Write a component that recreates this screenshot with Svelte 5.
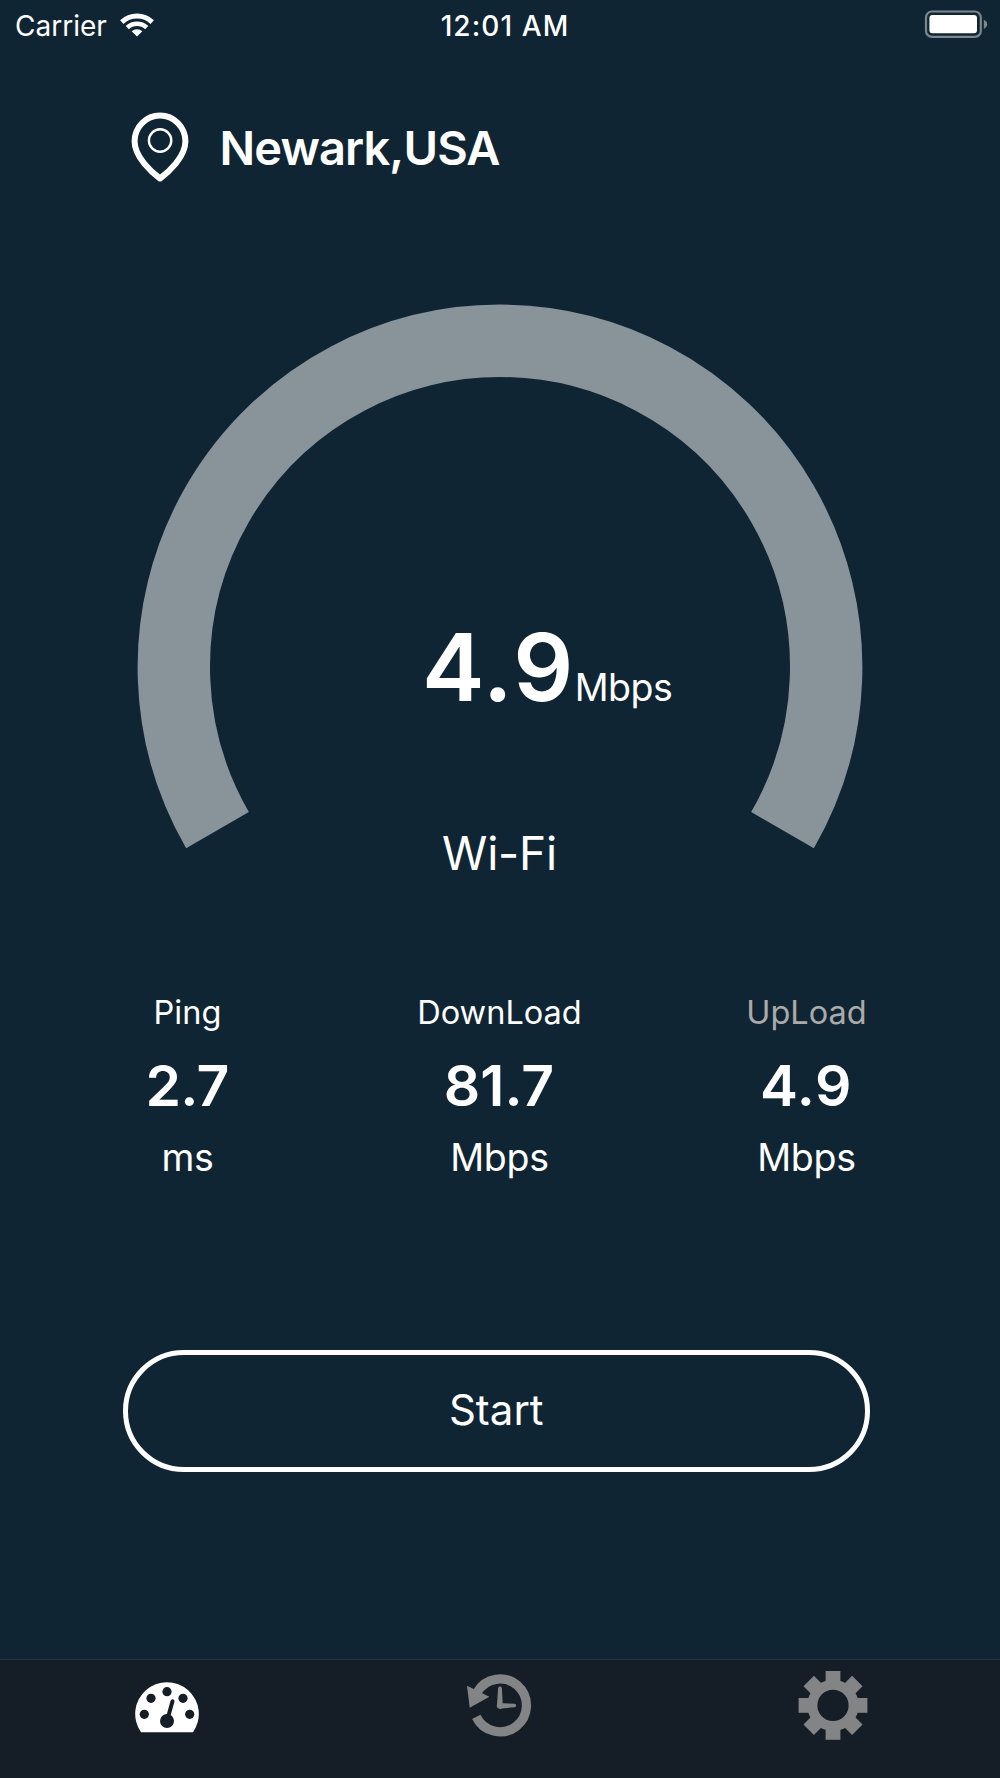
<script>
    let location = "Newark,USA";
    let network = "Wi-Fi";
    let speed = { value: "4.9", unit: "Mbps" };

    let results = [
        { label: "Ping", value: "2.7", unit: "ms", name: "ping" },
        { label: "DownLoad", value: "81.7", unit: "Mbps", name: "download" },
        { label: "UpLoad", value: "4.9", unit: "Mbps", name: "upload" }
    ];

    let gearAngles = [0, 45, 90, 135, 180, 225, 270, 315];
    let dialDots = [[17.3, 49.3], [24, 33.3], [40, 26.7], [56, 33.3], [62.7, 49.3]];
</script>

<div class="screen">
    <header class="statusBar">
        <div class="carrier">
            <span class="carrierName">Carrier</span>
            <svg class="wifi" width="36" height="28" viewBox="0 0 36 28">
                <path d="M2.8 12.1 A22 22 0 0 1 33.2 12.1" fill="none" stroke="#fff" stroke-width="5" />
                <path d="M8.3 17.6 A14.2 14.2 0 0 1 27.7 17.6" fill="none" stroke="#fff" stroke-width="4.6" />
                <path d="M18 26.6 L12.7 21.3 A7.8 7.8 0 0 1 23.3 21.3 Z" fill="#fff" />
            </svg>
        </div>
        <span class="clock">12:01 AM</span>
        <svg class="battery" width="64" height="28" viewBox="0 0 64 28">
            <rect x="2" y="1.5" width="54.8" height="25.4" rx="6" fill="none" stroke="#7d878e" stroke-width="2.2" />
            <rect x="5.4" y="5" width="47.6" height="18.2" rx="3" fill="#fff" />
            <path d="M59.8 9.5 Q63.2 11.5 63.2 14.2 Q63.2 17 59.8 19 Z" fill="#7d878e" />
        </svg>
    </header>

    <div class="location">
        <svg width="60" height="72" viewBox="0 0 60 72">
            <path d="M30 66.5 C22 60.5 4.6 45 4.6 29.5 A25.4 25.9 0 0 1 55.4 29.5 C55.4 45 38 60.5 30 66.5 Z" fill="none" stroke="#fff" stroke-width="6" stroke-linejoin="round" />
            <circle cx="30.1" cy="28.5" r="11.2" fill="none" stroke="#fff" stroke-width="2.4" />
        </svg>
        <span class="place">{location}</span>
    </div>

    <div class="meter">
        <svg width="726" height="546" viewBox="0 0 726 546">
            <path d="M80.5 526.1 A326.2 326.2 0 1 1 645.5 526.1" fill="none" stroke="#89939a" stroke-width="72.4" />
        </svg>
        <div class="reading">
            <div class="speed">
                <span class="speedValue">{speed.value}</span>
                <span class="speedUnit">{speed.unit}</span>
            </div>
            <div class="network">{network}</div>
        </div>
    </div>

    <div class="results">
        {#each results as result}
            <div class="result {result.name}">
                <span class="label">{result.label}</span>
                <span class="value">{result.value}</span>
                <span class="unit">{result.unit}</span>
            </div>
        {/each}
    </div>

    <button class="startButton">Start</button>

    <nav class="tabBar">
        <button class="tab active" aria-label="Speed test">
            <svg width="80" height="80" viewBox="0 0 80 80">
                <path d="M14 67.3 A31.8 31.8 0 1 1 66 67.3 Z" fill="currentColor" />
                <g class="cutout">
                    {#each dialDots as [x, y]}
                        <circle cx={x} cy={y} r="4.6" />
                    {/each}
                    <circle cx="40" cy="56" r="7" />
                    <path d="M41.4 51 L45.5 36.3" stroke-width="4" stroke-linecap="round" />
                </g>
            </svg>
        </button>
        <button class="tab" aria-label="History">
            <svg width="80" height="80" viewBox="0 0 80 80">
                <path d="M16.3 51.9 A26.4 26.4 0 1 0 17.2 27.2" fill="none" stroke="currentColor" stroke-width="9.3" />
                <path d="M7 20.7 L29.4 31.7 L9.7 42.7 Z" fill="currentColor" />
                <path d="M38.1 22.8 Q40 19.6 41.9 22.8 L42.7 38.2 L54.8 38.7 Q57.6 40.4 54.8 42.2 L42 43.4 A3.3 3.3 0 0 1 37 39.5 Z" fill="currentColor" />
            </svg>
        </button>
        <button class="tab" aria-label="Settings">
            <svg width="80" height="80" viewBox="0 0 80 80">
                <circle cx="40" cy="40.4" r="20.6" fill="none" stroke="currentColor" stroke-width="10" />
                {#each gearAngles as angle}
                    <rect x="32.6" y="6" width="14.8" height="15.5" fill="currentColor" transform="rotate({angle} 40 40.4)" />
                {/each}
            </svg>
        </button>
    </nav>
</div>

<style>
    :global(body) {
        margin: 0;
        background: #102533;
    }

    .screen {
        display: flex;
        flex-direction: column;
        width: 1000px;
        height: 1778px;
        background: #102533;
        color: #fff;
        font-family: Inter, "Liberation Sans", sans-serif;
        overflow: hidden;
    }

    svg {
        display: block;
        flex: none;
    }

    button {
        background: none;
        border: none;
        padding: 0;
        font-family: inherit;
        color: inherit;
    }

    .statusBar {
        display: grid;
        grid-template-columns: 1fr auto 1fr;
        align-items: center;
        height: 52px;
        padding: 0 12px 0 15px;
        font-size: 28px;
        line-height: 52px;
    }

    .carrier {
        display: flex;
        align-items: center;
        gap: 12px;
    }

    .wifi {
        margin-bottom: 4px;
    }

    .clock {
        margin-left: 7px;
        font-weight: 500;
        letter-spacing: 1.1px;
    }

    .battery {
        justify-self: end;
        margin-bottom: 4px;
    }

    .location {
        display: flex;
        align-items: center;
        height: 192px;
        padding-left: 129.5px;
        gap: 30px;
    }

    .place {
        margin-bottom: 2px;
        font-size: 47px;
        font-weight: 600;
        letter-spacing: -0.9px;
    }

    .meter {
        display: grid;
        justify-content: center;
        margin-top: 60px;
    }

    .meter > * {
        grid-area: 1 / 1;
    }

    .reading {
        display: flex;
        flex-direction: column;
        padding-top: 303px;
    }

    .speed {
        display: flex;
        align-items: baseline;
        padding-left: 285px;
        line-height: 120px;
    }

    .speedValue {
        font-size: 94px;
        font-weight: 600;
        letter-spacing: 1.4px;
    }

    .speedUnit {
        font-size: 37.5px;
        letter-spacing: -0.5px;
    }

    .network {
        margin-top: 75px;
        padding-right: 1px;
        text-align: center;
        font-size: 46px;
        line-height: 60px;
        letter-spacing: -0.2px;
    }

    .results {
        display: grid;
        grid-template-columns: 220px 404px 210px;
        margin-top: 100px;
        padding-left: 77.5px;
    }

    .result {
        display: flex;
        flex-direction: column;
        text-align: center;
    }

    .label {
        font-size: 32.5px;
        line-height: 60px;
    }

    .value {
        padding-right: 1px;
        font-size: 57px;
        font-weight: 600;
        line-height: 86px;
    }

    .unit {
        font-size: 37.5px;
        line-height: 58px;
        letter-spacing: -0.3px;
    }

    .ping .value {
        letter-spacing: -0.7px;
    }

    .upload .label {
        color: #aaa;
    }

    .upload .value {
        letter-spacing: 0.7px;
    }

    .startButton {
        width: 746.5px;
        height: 121.5px;
        margin: 163px 0 0 123px;
        padding-bottom: 2px;
        border: 5px solid #fff;
        border-radius: 61px;
        font-size: 42px;
    }

    .tabBar {
        display: grid;
        grid-template-columns: repeat(3, 1fr);
        height: 118px;
        margin-top: auto;
        border-top: 1px solid #27343e;
        background: #151d26;
    }

    .tab {
        display: flex;
        justify-content: center;
        padding-top: 5px;
        color: #828486;
    }

    .tab.active {
        color: #fff;
    }

    .cutout {
        fill: #151d26;
        stroke: #151d26;
        stroke-width: 0;
    }
</style>
